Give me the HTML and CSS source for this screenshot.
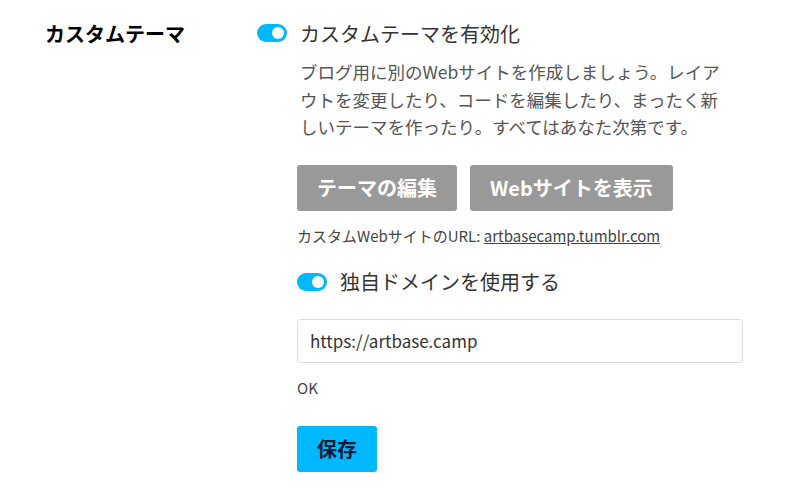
FILE: index.html
```html
<!DOCTYPE html>
<html>
<head>
    <meta charset="UTF-8">
    <title>カスタムテーマ</title>
    <link rel="stylesheet" href="styles.css">
</head>
<body>
<div class="section">
    <div class="section-title">カスタムテーマ</div>

    <div class="section-body">
        <label class="toggle-row">
            <span class="toggle on"><span class="knob"></span></span>
            <span class="toggle-label">カスタムテーマを有効化</span>
        </label>

        <div class="sub">
            <p class="description">ブログ用に別のWebサイトを作成しましょう。レイアウトを変更したり、コードを編集したり、まったく新しいテーマを作ったり。すべてはあなた次第です。</p>

            <div class="buttons">
                <button class="btn btn-gray">テーマの編集</button>
                <button class="btn btn-gray">Webサイトを表示</button>
            </div>

            <p class="url-line">カスタムWebサイトのURL: <a href="#">artbasecamp.tumblr.com</a></p>

            <label class="toggle-row domain-row">
                <span class="toggle on"><span class="knob"></span></span>
                <span class="toggle-label">独自ドメインを使用する</span>
            </label>

            <input class="domain-input" type="text" value="https://artbase.camp">

            <p class="status">OK</p>

            <button class="btn btn-save">保存</button>
        </div>
    </div>
</div>
</body>
</html>
```

FILE: styles.css
```css
body {
    font-family: "Noto Sans CJK JP", "Noto Sans", sans-serif;
    background-color: #ffffff;
    color: #222;
    margin: 0;
}

.section {
    display: flex;
    padding: 18px 0 0 45px;
}

.section-title {
    width: 212px;
    flex-shrink: 0;
    font-size: 20px;
    font-weight: bold;
    line-height: 32px;
    color: #000;
}

.section-body {
    width: 486px;
}

.sub {
    padding-left: 40px;
}

/* トグル */
.toggle-row {
    display: flex;
    align-items: center;
    height: 30px;
}

.toggle {
    position: relative;
    width: 30px;
    height: 18px;
    border-radius: 9px;
    background-color: #ccc;
    flex-shrink: 0;
}

.toggle.on {
    background-color: #00b8ff;
}

.toggle .knob {
    position: absolute;
    top: 3px;
    left: 3px;
    width: 12px;
    height: 12px;
    border-radius: 50%;
    background-color: #fff;
}

.toggle.on .knob {
    left: 15px;
}

.toggle-label {
    margin-left: 13px;
    font-size: 20px;
    color: #333;
}

.description {
    width: 430px;
    margin: 10px 0 0 3px;
    font-size: 17.5px;
    line-height: 27.5px;
    color: #555;
}

.buttons {
    display: flex;
    gap: 13px;
    margin-top: 24px;
}

.btn {
    height: 46px;
    padding: 0 20px;
    border: none;
    border-radius: 3px;
    font-family: inherit;
    font-size: 20px;
    font-weight: bold;
    cursor: pointer;
}

.btn-gray {
    background-color: #999;
    color: #fff;
}

.url-line {
    margin: 15px 0 0;
    font-size: 15px;
    line-height: 20px;
    color: #444;
}

.url-line a {
    color: #444;
}

.domain-row {
    margin-top: 21px;
}

.domain-input {
    display: block;
    box-sizing: border-box;
    width: 446px;
    height: 44px;
    margin-top: 22px;
    padding: 0 12px;
    border: 1px solid #ddd;
    border-radius: 3px;
    font-family: inherit;
    font-size: 17px;
    color: #333;
}

.status {
    margin: 15px 0 0;
    font-size: 15px;
    line-height: 20px;
    color: #444;
}

.btn-save {
    margin-top: 28px;
    width: 80px;
    padding: 0;
    background-color: #00b8ff;
    color: #001935;
}
```
